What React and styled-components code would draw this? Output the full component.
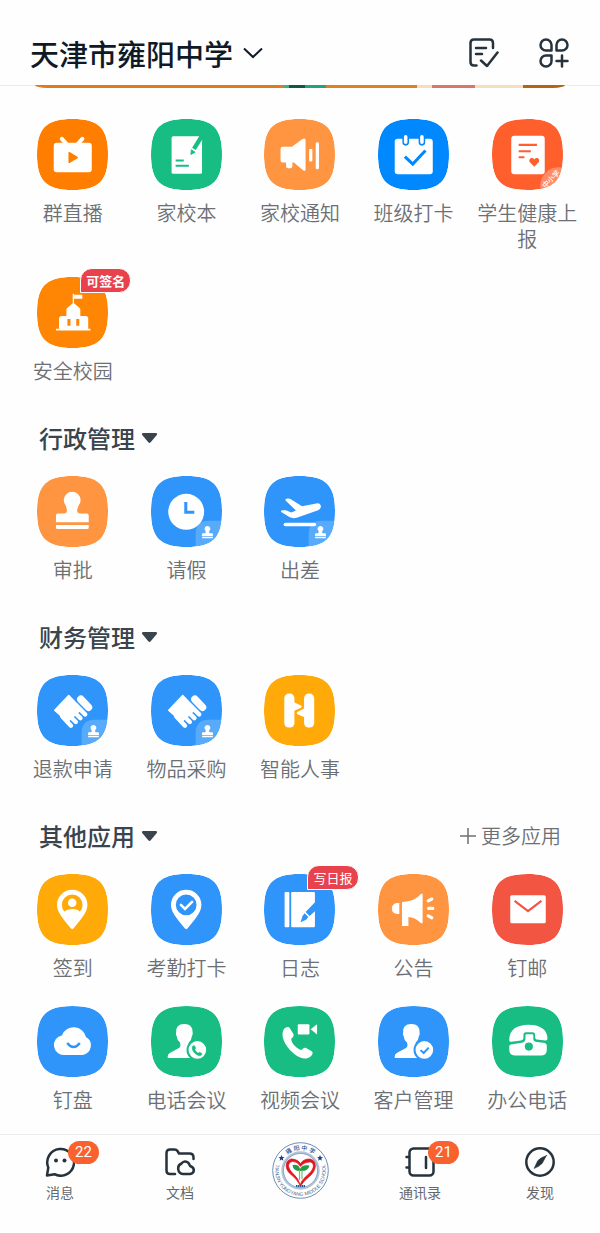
import React from "react";
import styled, { createGlobalStyle } from "styled-components";

const GlobalStyle = createGlobalStyle`
  * { box-sizing: border-box; }
  body {
    margin: 0;
    background: #fefefe;
    font-family: "Noto Sans CJK SC", sans-serif;
  }
  button {
    border: 0;
    padding: 0;
    background: none;
    font: inherit;
    color: inherit;
    cursor: pointer;
  }
  h1, h2 { margin: 0; font: inherit; }
  svg { display: block; }
`;

const Page = styled.div`
  display: flex;
  flex-direction: column;
  min-height: 100vh;
`;

const Header = styled.header`
  display: flex;
  align-items: center;
  justify-content: space-between;
  height: 86px;
  padding: 20px 31px 0 30px;
  border-bottom: 1px solid #ececec;
`;

const SchoolButton = styled.button`
  display: flex;
  align-items: center;
  gap: 10px;
  font-size: 29px;
  line-height: 40px;
  font-weight: 500;
  color: #0f1a26;
`;

const HeaderActions = styled.div`
  display: flex;
  gap: 40px;
  color: #26323c;
`;

const Banner = styled.div`
  height: 3px;
  margin: -1px 35px 0;
  border-radius: 0 0 12px 12px / 0 0 3px 3px;
  background: linear-gradient(
    90deg,
    #e07a1f 0 47%, #3fae80 47% 48%, #14563f 48% 51%, #22a37c 51% 55%,
    #e0811f 55% 72%, #f3dfc0 72% 75%, #d9786a 75% 83%, #f3dfc0 83% 92%,
    #b3650f 92%
  );
`;

const Main = styled.main`
  flex: 1;
  display: flex;
  flex-direction: column;
  gap: 38px;
  padding: 31px 16px 20px;
`;

const Section = styled.section`
  display: flex;
  flex-direction: column;
  gap: 22px;
`;

const SectionHead = styled.div`
  display: flex;
  align-items: center;
  justify-content: space-between;
  height: 32px;
  padding: 0 23px;
`;

const SectionTitle = styled.button`
  display: flex;
  align-items: center;
  gap: 6px;
  font-size: 24px;
  line-height: 32px;
  font-weight: 500;
  color: #3a444d;
`;

const MoreButton = styled.button`
  display: flex;
  align-items: center;
  gap: 5px;
  font-size: 20px;
  line-height: 32px;
  font-weight: 350;
  color: #6c7074;
`;

const AppGrid = styled.div`
  display: grid;
  grid-template-columns: repeat(5, 1fr);
  row-gap: 25px;
`;

const AppButton = styled.button`
  display: flex;
  flex-direction: column;
  align-items: center;
  justify-content: flex-start;
  gap: 10px;
  font-size: 20px;
  line-height: 26px;
  font-weight: 350;
  color: #6c7074;
`;

const AppLabel = styled.span`
  width: 102px;
`;

const Tile = styled.span`
  position: relative;
  width: 71px;
  height: 71px;
`;

const Tag = styled.span`
  position: absolute;
  left: 43px;
  top: -9px;
  height: 25px;
  padding: 0 5px;
  border: 1px solid #fff;
  border-radius: 12px 12px 12px 0;
  background: #e8434d;
  color: #fff;
  font-size: 13px;
  line-height: 23px;
  font-weight: ${(p) => (p.$bold ? 700 : 400)};
  white-space: nowrap;
`;

const TabBar = styled.nav`
  display: grid;
  grid-template-columns: repeat(5, 1fr);
  height: 99px;
  padding-top: 7px;
  border-top: 1px solid #ececec;
`;

const Tab = styled.a`
  display: flex;
  flex-direction: column;
  align-items: center;
  gap: 5px;
  padding-top: ${(p) => (p.$logo ? "0" : "5px")};
  color: #65696d;
  font-size: 14px;
  line-height: 20px;
  text-decoration: none;
`;

const TabIcon = styled.span`
  position: relative;
  color: #26323c;
`;

const Badge = styled.span`
  position: absolute;
  left: 23px;
  top: -6px;
  height: 23px;
  padding: 0 7px;
  border-radius: 12px;
  background: #f9622f;
  color: #fff;
  font: 400 15px/23px Roboto, sans-serif;
`;

const SQUIRCLE = "M0 35C0 9 9 0 35 0S70 9 70 35 61 70 35 70 0 61 0 35Z";

const Stamp = () => (
  <g fill="#fff">
    <path d="M29.5 37V33.5L28.6 29.5A8.3 8.3 0 1 1 40.8 29.5L39.5 33.5Q39.5 37 43 37H49Q51 37 51 39V45.7H18.7V39Q18.7 37 20.7 37H26.5Q29.5 37 29.5 34Z" />
    <path d="M18.7 48.3H51V51Q51 52.3 49.7 52.3H20Q18.7 52.3 18.7 51Z" />
  </g>
);

const StampCorner = () => (
  <g>
    <path d="M44 70V57Q44 44 57 44H70V70Z" fill="#fff" opacity=".2" />
    <g transform="translate(44.2 44.2) scale(.33)"><Stamp /></g>
  </g>
);

const Hand = () => (
  <g stroke="#fff" strokeLinecap="round" fill="#fff">
    <path d="M17.5 34.7L31.3 20.2L44 33.5L30 46Z" strokeWidth="1.5" strokeLinejoin="round" />
    <path d="M25 41L33.5 50M31 39L38.300 46.300M35 35L42.800 42.600M38 29.500L47.500 38.800" strokeWidth="4.400" fill="none" />
    <path d="M43.300 24L50.700 31.800" strokeWidth="7.500" />
  </g>
);

const Person = () => (
  <path fill="#fff" d="M16.500 51.300V49.500Q16.500 47.500 18.500 46.300L27.500 41.500Q29.800 40 28.600 36Q25.800 34 25.200 29.500Q23.800 28.500 24.800 26Q24.300 18 32.500 17.800Q41 17.500 41 26Q41.800 28.500 40.400 29.500Q39.800 34 37.300 36Q36 40 38.500 42.500L44 51.300Z" />
);

const Pin = () => (
  <path fill="#fff" fillRule="evenodd" d="M34.700 15.500A15 15 0 0 0 19.700 30.500C19.700 39 29 47.500 33 53.300Q34.700 55.500 36.400 53.300C40.400 47.500 49.700 39 49.700 30.500A15 15 0 0 0 34.700 15.500ZM34.700 20.300A10.200 10.200 0 1 1 34.700 40.700 10.200 10.200 0 1 1 34.700 20.300Z" />
);

const HANDSET = "M19.500 23C22 20 24.500 20.300 25.500 22L29 27.500C30 29.500 28 31 26.800 32.600C27 37 32.500 42.500 37 43.500C38.500 42 39.500 40.500 41.500 41.500L47 44.500C49 46 47.500 48.500 45.500 50C42 53 36 52.500 29 46.500C20 39 16 29 19.500 23Z";

const glyphs = {
  live: (c) => (
    <g>
      <rect x="16.500" y="23.500" width="37.500" height="29" rx="3" fill="#fff" />
      <path d="M24.500 19.500L30 25.500M44.800 19.500L39.500 25.500" stroke="#fff" strokeWidth="4" strokeLinecap="round" />
      <path d="M31.800 33.300L39.500 38L31.800 42.700Z" fill={c} stroke={c} strokeWidth="1.600" strokeLinejoin="round" />
    </g>
  ),
  notebook: (c) => (
    <g>
      <path d="M22 17H47.500L50.300 21V52.500Q50.300 54 48.800 54H21.800Q20.300 54 20.300 52.500V18.500Q20.300 17 22 17Z" fill="#fff" />
      <path d="M49.800 17.500L42.300 29.500" stroke={c} strokeWidth="4.200" />
      <path d="M39.800 30.300L43.500 32.800L39.300 35Z" fill={c} stroke={c} strokeWidth=".8" />
      <path d="M24.300 41H32.300M24.300 46H37.300" stroke={c} strokeWidth="2" />
    </g>
  ),
  speaker: () => (
    <g fill="#fff">
      <path d="M18.300 27.300H27.500L38 19.800Q41 18 41 21.500V49Q41 52.500 38.500 50.500L29.500 43H28V46.500Q28 48.500 26 48.500H23.500Q21.800 48.500 21.800 46.500V43H18.300Q16.300 43 16.300 41V29.300Q16.300 27.300 18.300 27.300Z" />
      <rect x="44.500" y="29.500" width="3.200" height="12.500" rx="1" />
      <rect x="51" y="23" width="3.200" height="26.500" rx="1.300" />
    </g>
  ),
  calendar: (c) => (
    <g>
      <rect x="16.500" y="19.500" width="37.500" height="35" rx="3" fill="#fff" />
      <g fill="#fff" stroke={c} strokeWidth="1.500">
        <rect x="24.800" y="15" width="5" height="10.500" rx="2.500" />
        <rect x="40.800" y="15" width="5" height="10.500" rx="2.500" />
      </g>
      <path d="M26.500 37L34.300 44.500L46.800 31" fill="none" stroke={c} strokeWidth="3" />
    </g>
  ),
  health: (c) => (
    <g>
      <rect x="19" y="16.500" width="33" height="38" rx="3" fill="#fff" />
      <path d="M26.300 25.500H44.300M26.300 31.700H38.300M26.300 37.700H32" stroke={c} strokeWidth="2" />
      <path d="M41.700 47L37.600 43C35 39.500 39.500 36.500 41.700 40C44 36.500 48.400 39.500 45.800 43Z" fill={c} />
      <circle cx="66" cy="66" r="18.500" fill="#fff" opacity=".28" />
    </g>
  ),
  campus: (c) => (
    <g fill="#fff">
      <path d="M35.200 26V16.500H36.500V17.500H44.700V21.500H36.500V26L42 30.500Q42.700 31 42.700 32V38.500H48Q50.500 38.500 50.500 41V51H52.700V52.800H18.700V51H21.700V41Q21.700 38.500 24 38.500H29V32Q29 31 29.700 30.500Z" />
      <path d="M30 41.500H33V48H30ZM38.700 41.500H41.700V48H38.700Z" fill={c} />
    </g>
  ),
  stamp: () => <Stamp />,
  clock: (c) => (
    <g>
      <circle cx="34.700" cy="35.300" r="17.700" fill="#fff" />
      <path d="M34.300 25.700V35.800H42.700" fill="none" stroke={c} strokeWidth="3" />
      <StampCorner />
    </g>
  ),
  plane: () => (
    <g>
      <path fill="#fff" d="M22 22.500Q24 21.500 26.500 23L37.500 29.800L51.500 27Q55 26.300 56 29Q56.700 32 53.300 33.700L33 41Q28.500 42.500 25 40.500L17 35.500Q16 34 18.500 33.800L21.500 33.800L27 36L31.500 34L21.500 24.500Q20.500 23.300 22 22.500Z" />
      <path d="M21 47.800H49.700" stroke="#fff" strokeWidth="3.400" strokeLinecap="round" />
      <StampCorner />
    </g>
  ),
  hand: () => <g><Hand /><StampCorner /></g>,
  hr: () => (
    <g fill="#fff">
      <rect x="20" y="18.300" width="10" height="33.500" rx="4.500" />
      <rect x="39.500" y="18.300" width="10" height="33.500" rx="4.500" />
      <path d="M29 26.500L36.500 30Q38 31.200 36.500 32.300L29 35.500Z" />
      <path d="M40.500 32.500L32.800 36.500Q31.500 37.500 33 38.600L40.500 42Z" />
    </g>
  ),
  checkin: () => (
    <g fill="#fff">
      <Pin />
      <circle cx="34.700" cy="28.300" r="4.200" />
      <path d="M26 38.500Q28.500 34.500 34.700 34.500T43.400 38.500L34.700 43Z" />
    </g>
  ),
  attendance: () => (
    <g>
      <Pin />
      <path d="M29.500 30.500L33.500 34.500L40.500 27.500" fill="none" stroke="#fff" strokeWidth="2.600" strokeLinecap="round" />
    </g>
  ),
  journal: (c) => (
    <g>
      <rect x="20.300" y="17.700" width="4.700" height="34.700" rx="1" fill="#fff" />
      <rect x="26.800" y="17.700" width="23.400" height="34.700" rx="1" fill="#fff" />
      <path d="M51 27L41 37.500L45 41.500L51 36ZM40 38.700L43.700 42.500L41.500 45L36 47.500L38 41.500Z" fill={c} />
    </g>
  ),
  notice: () => (
    <g fill="#fff">
      <path d="M21 28.500V39.500H19Q13.700 39 13.700 34T19 28.500Z" />
      <path d="M23.700 27.500Q36 27.500 42.500 19.500H44V48.500H42.500Q36 42.500 30 42.500V51.300H23.700Z" />
      <path d="M49.500 26.500L53 24.700M50 34H54M49.500 41.300L53 43.100" stroke="#fff" strokeWidth="3.200" strokeLinecap="round" />
    </g>
  ),
  mail: (c) => (
    <g>
      <rect x="18" y="21" width="35" height="27.500" rx="1.500" fill="#fff" />
      <path d="M22.300 26.500L35.500 36.500L48.700 26.500" fill="none" stroke={c} strokeWidth="2.200" />
    </g>
  ),
  cloud: (c) => (
    <g>
      <path fill="#fff" d="M24.500 29A12.500 12.500 0 0 1 48.300 30.500A9.500 9.500 0 0 1 45 48.200H27A9.700 9.700 0 0 1 24.500 29Z" />
      <path d="M29.800 36.500Q36 44.500 42.200 36.500" fill="none" stroke={c} strokeWidth="2.400" />
    </g>
  ),
  conference: (c) => (
    <g>
      <Person />
      <circle cx="45.700" cy="43.300" r="9.700" fill="#fff" stroke={c} strokeWidth="2" />
      <g transform="translate(34.500 32) scale(.33)"><path d={HANDSET} fill={c} stroke={c} strokeWidth="1" /></g>
    </g>
  ),
  video: () => (
    <g fill="#fff">
      <path d={HANDSET} />
      <rect x="33.300" y="18" width="11.500" height="10" rx="1" />
      <path d="M46 23L52.300 18V28Z" />
    </g>
  ),
  customer: (c) => (
    <g>
      <Person />
      <circle cx="45.700" cy="43.300" r="9.700" fill="#fff" stroke={c} strokeWidth="2" />
      <path d="M42 43.500L45 46.300L50 41" fill="none" stroke={c} strokeWidth="2" />
    </g>
  ),
  phone: (c) => (
    <g>
      <path fill="#fff" d="M17 33.500C17 23 25 18.500 36 18.500S54.700 23 54.700 32Q54.700 34.300 52.500 34L44 33Q42.500 32.500 42.500 31V28.500Q42.500 26 40 26H33.500Q31 26 31 28.500V31.500Q31 33.500 28.500 34L19 35.300Q17 35.600 17 33.500Z" />
      <path fill="#fff" d="M18.500 38L29.500 36.300Q33 35.500 33 32V28.500Q33 27.800 34 27.800H39.800Q40.700 27.800 40.700 28.800V32.500Q40.700 34.800 43 35.200L52 36.500Q54 37 54 39V43.500Q54 48.700 49 48.700H22.500Q17 48.700 17 43.500V40Q17 38.500 18.500 38Z" />
      <circle cx="36.300" cy="40" r="4" fill={c} />
    </g>
  ),
};

function AppItem({ name, icon, color, tag, boldTag, corner }) {
  return (
    <AppButton type="button">
      <Tile>
        <svg width="71" height="71" viewBox="0 0 70 70" aria-hidden="true">
          <clipPath id={`tile-${name}`}><path d={SQUIRCLE} /></clipPath>
          <g clipPath={`url(#tile-${name})`}>
            <path d={SQUIRCLE} fill={color} />
            {glyphs[icon](color)}
          </g>
          {corner && (
            <text transform="translate(60 61) rotate(-45)" textAnchor="middle" fontSize="7" fontWeight="500" fill="#fff">
              {corner}
            </text>
          )}
        </svg>
        {tag && <Tag $bold={boldTag}>{tag}</Tag>}
      </Tile>
      <AppLabel>{name}</AppLabel>
    </AppButton>
  );
}

const BLUE = "#2f95fb";
const GREEN = "#18bd83";
const ORANGE = "#ff9541";
const AMBER = "#ffaa08";

const sections = [
  {
    apps: [
      { name: "群直播", icon: "live", color: "#ff7e00" },
      { name: "家校本", icon: "notebook", color: GREEN },
      { name: "家校通知", icon: "speaker", color: ORANGE },
      { name: "班级打卡", icon: "calendar", color: "#0089ff" },
      { name: "学生健康上报", icon: "health", color: "#ff5f2d", corner: "中小学" },
      { name: "安全校园", icon: "campus", color: "#ff8605", tag: "可签名", boldTag: true },
    ],
  },
  {
    title: "行政管理",
    apps: [
      { name: "审批", icon: "stamp", color: ORANGE },
      { name: "请假", icon: "clock", color: BLUE },
      { name: "出差", icon: "plane", color: BLUE },
    ],
  },
  {
    title: "财务管理",
    apps: [
      { name: "退款申请", icon: "hand", color: BLUE },
      { name: "物品采购", icon: "hand", color: BLUE },
      { name: "智能人事", icon: "hr", color: AMBER },
    ],
  },
  {
    title: "其他应用",
    more: true,
    apps: [
      { name: "签到", icon: "checkin", color: AMBER },
      { name: "考勤打卡", icon: "attendance", color: BLUE },
      { name: "日志", icon: "journal", color: BLUE, tag: "写日报" },
      { name: "公告", icon: "notice", color: ORANGE },
      { name: "钉邮", icon: "mail", color: "#f25643" },
      { name: "钉盘", icon: "cloud", color: BLUE },
      { name: "电话会议", icon: "conference", color: GREEN },
      { name: "视频会议", icon: "video", color: GREEN },
      { name: "客户管理", icon: "customer", color: BLUE },
      { name: "办公电话", icon: "phone", color: GREEN },
    ],
  },
];

const LineIcon = ({ children }) => (
  <svg width="30" height="30" viewBox="0 0 30 30" fill="none" stroke="currentColor" strokeWidth="2.500" strokeLinecap="round" strokeLinejoin="round" aria-hidden="true">
    {children}
  </svg>
);

const tabIcons = {
  chat: (
    <LineIcon>
      <path d="M2 28.500L3.300 20.500A13.400 13.400 0 1 1 9.500 27.200Z" />
      <circle cx="11" cy="13.500" r="2" fill="currentColor" stroke="none" />
      <circle cx="19.500" cy="13.500" r="2" fill="currentColor" stroke="none" />
    </LineIcon>
  ),
  docs: (
    <LineIcon>
      <path d="M10 27H5Q1.500 27 1.500 23.500V6Q1.500 2.500 5 2.500H9.500Q11.500 2.500 12.500 4L14 6.500H24.500Q28.500 6.500 28.500 10.500V12" />
      <path d="M18 27A5.500 5.500 0 0 1 16.500 16.500Q19 13 23 15.500Q24.500 17 25 19Q28.800 20 28.800 23.200T25 27Z" />
    </LineIcon>
  ),
  contacts: (
    <LineIcon>
      <rect x="4.500" y="1.500" width="24" height="27" rx="4" />
      <path d="M1.500 10H4M1.500 20.500H4M21 10V21" />
    </LineIcon>
  ),
  discover: (
    <LineIcon>
      <circle cx="15" cy="15" r="13.700" />
      <path d="M21.500 8.500L17.300 16.300Q14 20 9 21.500L12.700 13.700Q16.500 10 21.500 8.500Z" fill="currentColor" strokeWidth=".5" />
    </LineIcon>
  ),
};

const STAR = "M0-3L.9-.9 3-.8 1.300.5 1.900 2.700 0 1.400-1.900 2.700-1.300.5-3-.8-.9-.9Z";

const SchoolLogo = () => (
  <svg width="57" height="57" viewBox="0 0 57 57" role="img" aria-label="雍阳中学">
    <circle cx="28.500" cy="28.500" r="27.800" fill="#fff" stroke="#6c8fb5" strokeWidth="1" />
    <circle cx="28.500" cy="28.500" r="18" fill="#fff" stroke="#b2c3da" strokeWidth="2.400" />
    <circle cx="28.500" cy="28.500" r="17" fill="none" stroke="#5d7fab" strokeWidth=".5" />
    <path id="ring-top" d="M8 28.500A20.500 20.500 0 0 1 49 28.500" fill="none" />
    <path id="ring-bottom" d="M8 14A25.200 25.200 0 1 0 49 14" fill="none" />
    <text fontSize="6" fontWeight="500" fill="#2a5592">
      <textPath href="#ring-top" startOffset="50%" textAnchor="middle">雍 阳 中 学</textPath>
    </text>
    <text fontSize="5" fill="#3f658f" fontFamily="Liberation Sans, sans-serif">
      <textPath href="#ring-bottom" startOffset="50%" textAnchor="middle">TIANJIN YONGYANG MIDDLE SCHOOL</textPath>
    </text>
    <path d={STAR} transform="translate(9.500 16)" fill="#123f8c" />
    <path d={STAR} transform="translate(48 16)" fill="#123f8c" />
    <path d="M28.500 44Q25 37 19 32.500C11 26 14 16.500 20.500 17Q26 17.500 28.500 21.500Q31.500 17 37 17C44 17 46 26 39 33Q32 38.500 28.500 44Q27.500 40 35.500 33C44 26 42 20 37.500 20Q32 20 28.500 24.500Q25 19 20.500 19.500C14.500 20.500 16 27 21 31.500Q26.500 36 28.500 44Z" fill="#e01620" stroke="#e01620" strokeWidth=".7" />
    <path d="M28 29Q21 29 20.500 23Q27 22 28 27Q30 22 37.500 23.500Q36 29.500 29 29Z" fill="#269b45" />
    <path d="M27.500 28V38M30 28V37" stroke="#79ba78" strokeWidth="1.200" />
    <path d="M24 44H33" stroke="#29558f" strokeWidth="2.200" strokeDasharray="1.500 .5" />
  </svg>
);

const tabs = [
  { label: "消息", icon: "chat", badge: "22" },
  { label: "文档", icon: "docs" },
  { logo: true },
  { label: "通讯录", icon: "contacts", badge: "21" },
  { label: "发现", icon: "discover" },
];

export default function App() {
  return (
    <Page>
      <GlobalStyle />
      <Header>
        <h1>
          <SchoolButton type="button">
            天津市雍阳中学
            <svg width="20" height="12" viewBox="0 0 20 12" fill="none" stroke="currentColor" strokeWidth="2" aria-hidden="true">
              <path d="M1 1.500L10 10L19 1.500" />
            </svg>
          </SchoolButton>
        </h1>
        <HeaderActions>
          <button type="button" aria-label="待办">
            <LineIcon>
              <path d="M7.500 27.500H5Q1.500 27.500 1.500 24V5Q1.500 1.500 5 1.500H20.500Q24 1.500 24 5V10" />
              <path d="M7 10H17M7 16H13" />
              <path d="M12 22.500L18 28L28.500 14.500" />
            </LineIcon>
          </button>
          <button type="button" aria-label="添加应用">
            <LineIcon>
              <path d="M7 1.500A5.500 5.500 0 1 0 7 12.500H12.500V7A5.500 5.500 0 0 0 7 1.500Z" />
              <path d="M23 1.500A5.500 5.500 0 1 1 23 12.500H17.500V7A5.500 5.500 0 0 1 23 1.500Z" />
              <path d="M7 28.500A5.500 5.500 0 1 1 7 17.500H12.500V23A5.500 5.500 0 0 1 7 28.500Z" />
              <path d="M23 17.500V28.500M17.500 23H28.500" />
            </LineIcon>
          </button>
        </HeaderActions>
      </Header>
      <Banner />
      <Main>
        {sections.map((section, i) => (
          <Section key={i}>
            {section.title && (
              <SectionHead>
                <h2>
                  <SectionTitle type="button">
                    {section.title}
                    <svg width="17" height="11" viewBox="0 0 17 11" fill="currentColor" aria-hidden="true">
                      <path d="M2 0H15Q17 .5 15.800 2L9.700 9.300Q8.500 10.500 7.300 9.300L1.200 2Q0 .5 2 0Z" />
                    </svg>
                  </SectionTitle>
                </h2>
                {section.more && (
                  <MoreButton type="button">
                    <svg width="16" height="16" viewBox="0 0 16 16" stroke="currentColor" strokeWidth="1.500" aria-hidden="true">
                      <path d="M8 0V16M0 8H16" />
                    </svg>
                    更多应用
                  </MoreButton>
                )}
              </SectionHead>
            )}
            <AppGrid>
              {section.apps.map((app) => <AppItem key={app.name} {...app} />)}
            </AppGrid>
          </Section>
        ))}
      </Main>
      <TabBar>
        {tabs.map((tab, i) => (
          <Tab key={i} href="#" $logo={tab.logo}>
            {tab.logo ? <SchoolLogo /> : (
              <>
                <TabIcon>
                  {tabIcons[tab.icon]}
                  {tab.badge && <Badge>{tab.badge}</Badge>}
                </TabIcon>
                {tab.label}
              </>
            )}
          </Tab>
        ))}
      </TabBar>
    </Page>
  );
}
